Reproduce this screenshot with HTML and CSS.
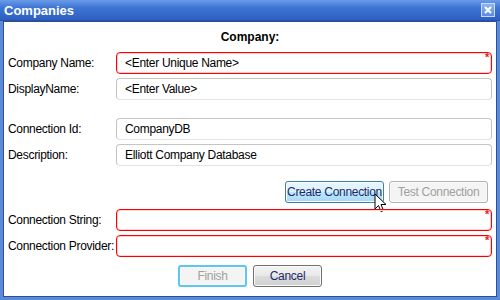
FILE: index.html
```html
<!DOCTYPE html>
<html lang="en">
<head>
    <meta charset="UTF-8">
    <title>Companies</title>
    <link rel="stylesheet" href="styles.css">
</head>
<body>
    <div class="window">
        <div class="titlebar">
            <span class="title">Companies</span>
            <span class="close-btn">
                <svg width="12" height="12" viewBox="0 0 12 12"><path d="M3 3 L9 9 M9 3 L3 9" stroke="#fff" stroke-width="2.2"/></svg>
            </span>
        </div>
        <div class="content">
            <h2 class="heading">Company:</h2>

            <div class="form-row row-first">
                <label>Company Name:</label>
                <div class="field required"><span class="value">&lt;Enter Unique Name&gt;</span><span class="star">*</span></div>
            </div>
            <div class="form-row">
                <label>DisplayName:</label>
                <div class="field"><span class="value">&lt;Enter Value&gt;</span></div>
            </div>

            <div class="form-row row-group">
                <label>Connection Id:</label>
                <div class="field"><span class="value">CompanyDB</span></div>
            </div>
            <div class="form-row">
                <label>Description:</label>
                <div class="field"><span class="value">Elliott Company Database</span></div>
            </div>

            <div class="button-row">
                <button class="btn btn-hover">Create Connection</button>
                <button class="btn btn-disabled">Test Connection</button>
                <svg class="cursor" width="14" height="22" viewBox="0 0 14 22">
                    <path d="M1 1 L1 16 L4.5 12.5 L7 18.5 L9.5 17.5 L7 11.5 L12 11.5 Z" fill="#fff" stroke="#000" stroke-width="1"/>
                </svg>
            </div>

            <div class="form-row">
                <label>Connection String:</label>
                <div class="field required"><span class="value"></span><span class="star">*</span></div>
            </div>
            <div class="form-row">
                <label>Connection Provider:</label>
                <div class="field required"><span class="value"></span><span class="star">*</span></div>
            </div>

            <div class="footer">
                <button class="btn btn-finish">Finish</button>
                <button class="btn">Cancel</button>
            </div>
        </div>
    </div>
</body>
</html>
```

FILE: styles.css
```css
* {
    margin: 0;
    padding: 0;
    box-sizing: border-box;
}

body {
    font-family: "Liberation Sans", Arial, sans-serif;
    font-size: 11px;
    background-color: #fff;
    color: #000;
}

.window {
    width: 500px;
    height: 300px;
    display: flex;
    flex-direction: column;
    background-color: #3a6fc8;
    border: 3px solid #5a8ad8;
    border-top: none;
    box-shadow: inset 0 0 0 1px #2a55a8;
}

.titlebar {
    height: 21px;
    margin: 0 -3px;
    padding: 0 5px 0 4px;
    display: flex;
    align-items: center;
    justify-content: space-between;
    background: linear-gradient(to bottom, #6b9be8 0%, #3d74d4 40%, #2c5fc0 100%);
    border-bottom: 1px solid #2a4f9c;
}

.title {
    color: #fff;
    font-weight: bold;
    font-size: 13px;
}

.close-btn {
    width: 14px;
    height: 14px;
    display: flex;
    align-items: center;
    justify-content: center;
    background: linear-gradient(to bottom, #8fb4ee, #5b8be0);
    border: 1px solid #c8dafa;
}

.content {
    flex: 1;
    background-color: #fff;
    border: 1px solid #2a4f9c;
    padding: 0 4px;
    display: flex;
    flex-direction: column;
}

.heading {
    text-align: center;
    font-size: 12px;
    font-weight: bold;
    margin: 8px 0 0 0;
    height: 14px;
    line-height: 14px;
}

.form-row {
    display: flex;
    align-items: center;
    margin-top: 4px;
}

.row-first {
    margin-top: 8px;
}

.row-group {
    margin-top: 18px;
}

.form-row label {
    width: 108px;
    flex-shrink: 0;
    white-space: nowrap;
    font-size: 12px;
    line-height: 14px;
    letter-spacing: -0.3px;
}

.field {
    flex: 1;
    height: 22px;
    position: relative;
    display: flex;
    align-items: center;
    padding-left: 8px;
    border: 1px solid #c4c4c4;
    border-bottom-color: #e2e3ea;
    border-radius: 4px;
    font-size: 12px;
    letter-spacing: -0.3px;
}

.field.required {
    border: 1px solid #ff0000;
    box-shadow: inset 0 0 0 1px #fcd0d0;
}

.star {
    position: absolute;
    top: -1px;
    right: 2px;
    color: #e02020;
    font-size: 11px;
    font-weight: bold;
    line-height: 11px;
}

.button-row {
    display: flex;
    justify-content: flex-end;
    gap: 5px;
    margin: 15px 4px 2px 0;
    position: relative;
}

.btn {
    height: 22px;
    font-family: "Liberation Sans", Arial, sans-serif;
    font-size: 12px;
    letter-spacing: -0.3px;
    white-space: nowrap;
    color: #1a2a6a;
    border: 1px solid #707070;
    border-radius: 3px;
    background: linear-gradient(to bottom, #f4f4f4 0%, #e8e8e8 50%, #dcdcdc 51%, #d0d0d0 100%);
    box-shadow: inset 0 0 0 1px #fafafa;
}

.button-row .btn {
    width: 99px;
}

.btn-hover {
    border-color: #3c7fb1;
    background: linear-gradient(to bottom, #eaf6fd 0%, #d9f0fc 50%, #bee6fd 51%, #a7d9f5 100%);
}

.btn-disabled {
    color: #a0a0a0;
    border-color: #adb2b5;
    background: #f4f4f4;
}

.cursor {
    position: absolute;
    left: 366px;
    top: 12px;
}

.footer {
    display: flex;
    justify-content: center;
    gap: 6px;
    margin-top: 8px;
}

.footer .btn {
    width: 69px;
}

.btn-finish {
    color: #a0a0a0;
    border: 2px solid #5cc8f0;
    background: #f4f4f4;
}
```
